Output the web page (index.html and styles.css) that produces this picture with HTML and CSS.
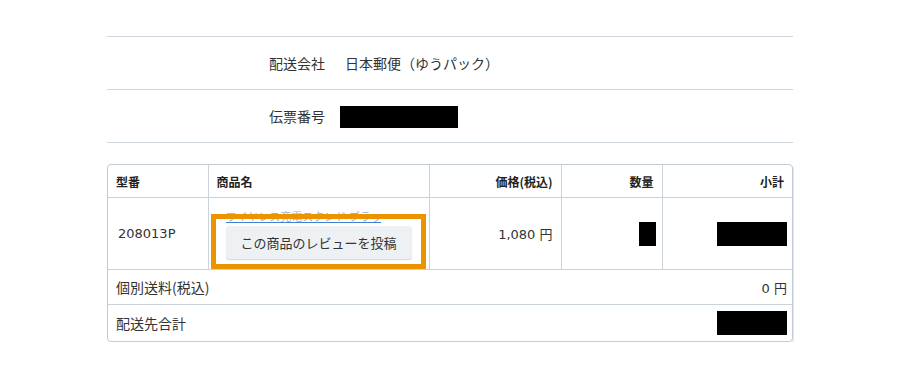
FILE: index.html
```html
<!DOCTYPE html>
<html lang="ja">
<head>
    <meta charset="UTF-8">
    <meta name="viewport" content="width=device-width, initial-scale=1.0">
    <title>注文詳細</title>
    <link rel="stylesheet" href="styles.css">
</head>
<body>
    <div class="order-detail">
        <div class="ship-info">
            <div class="ship-row">
                <div class="ship-label">配送会社</div>
                <div class="ship-value">日本郵便（ゆうパック）</div>
            </div>
            <div class="ship-row">
                <div class="ship-label">伝票番号</div>
                <div class="ship-value"><span class="masked slip-no"></span></div>
            </div>
        </div>

        <div class="items">
            <table class="items-table">
                <colgroup>
                    <col class="col-code">
                    <col class="col-name">
                    <col class="col-price">
                    <col class="col-qty">
                    <col>
                </colgroup>
                <thead>
                    <tr>
                        <th class="left">型番</th>
                        <th class="left">商品名</th>
                        <th>価格(税込)</th>
                        <th>数量</th>
                        <th>小計</th>
                    </tr>
                </thead>
                <tbody>
                    <tr class="item-row">
                        <td class="code latin">208013P</td>
                        <td class="name">
                            <div class="name-wrap">
                                <a href="#" class="item-link">ワイヤレス充電スタンド ブラック</a>
                                <button class="review-btn">この商品のレビューを投稿</button>
                                <div class="review-mark"></div>
                            </div>
                        </td>
                        <td class="num latin">1,080 円</td>
                        <td class="num"><span class="masked qty"></span></td>
                        <td class="num"><span class="masked subtotal"></span></td>
                    </tr>
                    <tr class="sum-row">
                        <td colspan="5">
                            <div class="sum-line">
                                <span>個別送料(税込)</span>
                                <span class="latin">0 円</span>
                            </div>
                        </td>
                    </tr>
                    <tr class="sum-row total">
                        <td colspan="5">
                            <div class="sum-line">
                                <span>配送先合計</span>
                                <span class="masked subtotal"></span>
                            </div>
                        </td>
                    </tr>
                </tbody>
            </table>
        </div>
    </div>
</body>
</html>
```

FILE: styles.css
```css
body {
    margin: 0;
    background-color: #fff;
    color: #333;
    font-family: 'Noto Sans CJK JP', 'DejaVu Sans', sans-serif;
}

.order-detail {
    width: 686px;
    margin: 0 auto;
    padding-top: 36px;
}

/* shipping info */
.ship-info {
    border-top: 1px solid #cfd6dd;
}

.ship-row {
    display: grid;
    grid-template-columns: 218px 1fr;
    column-gap: 20px;
    align-items: center;
    height: 52px;
    border-bottom: 1px solid #cfd6dd;
    font-size: 14px;
}

.ship-label {
    text-align: right;
}

.masked {
    display: inline-block;
    background-color: #000;
    vertical-align: middle;
}

.slip-no {
    width: 118px;
    height: 22px;
    margin-left: -5px;
}

/* numbers use a wider latin face */
.latin {
    font-family: 'DejaVu Sans', 'Noto Sans CJK JP', sans-serif;
    font-size: 13px;
}

/* items table */
.items {
    margin-top: 21px;
    border: 1px solid #c3ccd4;
    border-radius: 4px;
    box-shadow: 1px 1px 0 #e3e7eb;
    overflow: hidden;
}

.items-table {
    width: 100%;
    border-collapse: collapse;
    table-layout: fixed;
}

.col-code {
    width: 100px;
}

.col-name {
    width: 221px;
}

.col-price {
    width: 132px;
}

.col-qty {
    width: 101px;
}

.items-table th,
.items-table td {
    border: 1px solid #cbd3da;
    padding: 0 8px;
}

.items-table tr > :first-child {
    border-left: none;
}

.items-table tr > :last-child {
    border-right: none;
}

.items-table thead th {
    border-top: none;
    height: 32px;
    font-size: 12px;
    font-weight: bold;
    text-align: right;
    color: #222;
}

.items-table th.left {
    text-align: left;
}

.item-row td {
    height: 71px;
    font-size: 14px;
    vertical-align: middle;
}

.item-row td.latin {
    font-size: 13px;
}

.item-row .code {
    padding-left: 10px;
}

.item-row .num {
    text-align: right;
}

.item-row td:nth-child(4) {
    padding-right: 6px;
}

.item-row td:nth-child(5) {
    padding-right: 5px;
}

.qty {
    width: 17px;
    height: 24px;
}

.subtotal {
    width: 70px;
    height: 24px;
}

/* product name cell */
.item-row .name {
    padding: 0;
    vertical-align: top;
}

.name-wrap {
    position: relative;
    padding: 11px 0 0 17px;
    height: 60px;
}

.item-link {
    display: block;
    width: 155px;
    font-size: 11px;
    line-height: 14px;
    color: #8fb4e6;
    white-space: nowrap;
    overflow: hidden;
    text-decoration: underline;
    text-decoration-color: #3f7fd6;
}

.review-btn {
    display: block;
    width: 186px;
    height: 33px;
    margin-top: 3px;
    border: none;
    border-radius: 3px;
    background-color: #eef1f4;
    box-shadow: 0 1px 1px #d3d8dd;
    font-family: inherit;
    font-size: 13px;
    color: #333;
    cursor: pointer;
}

.review-mark {
    position: absolute;
    left: 2px;
    top: 16px;
    right: 3px;
    bottom: 0;
    border: 5px solid #ec9400;
    pointer-events: none;
}

/* totals */
.sum-row td {
    height: 34px;
    font-size: 14px;
    padding: 0 5px 0 8px;
}

.sum-row.total td {
    height: 36px;
    border-bottom: none;
}

.sum-line {
    display: flex;
    justify-content: space-between;
    align-items: center;
}
```
